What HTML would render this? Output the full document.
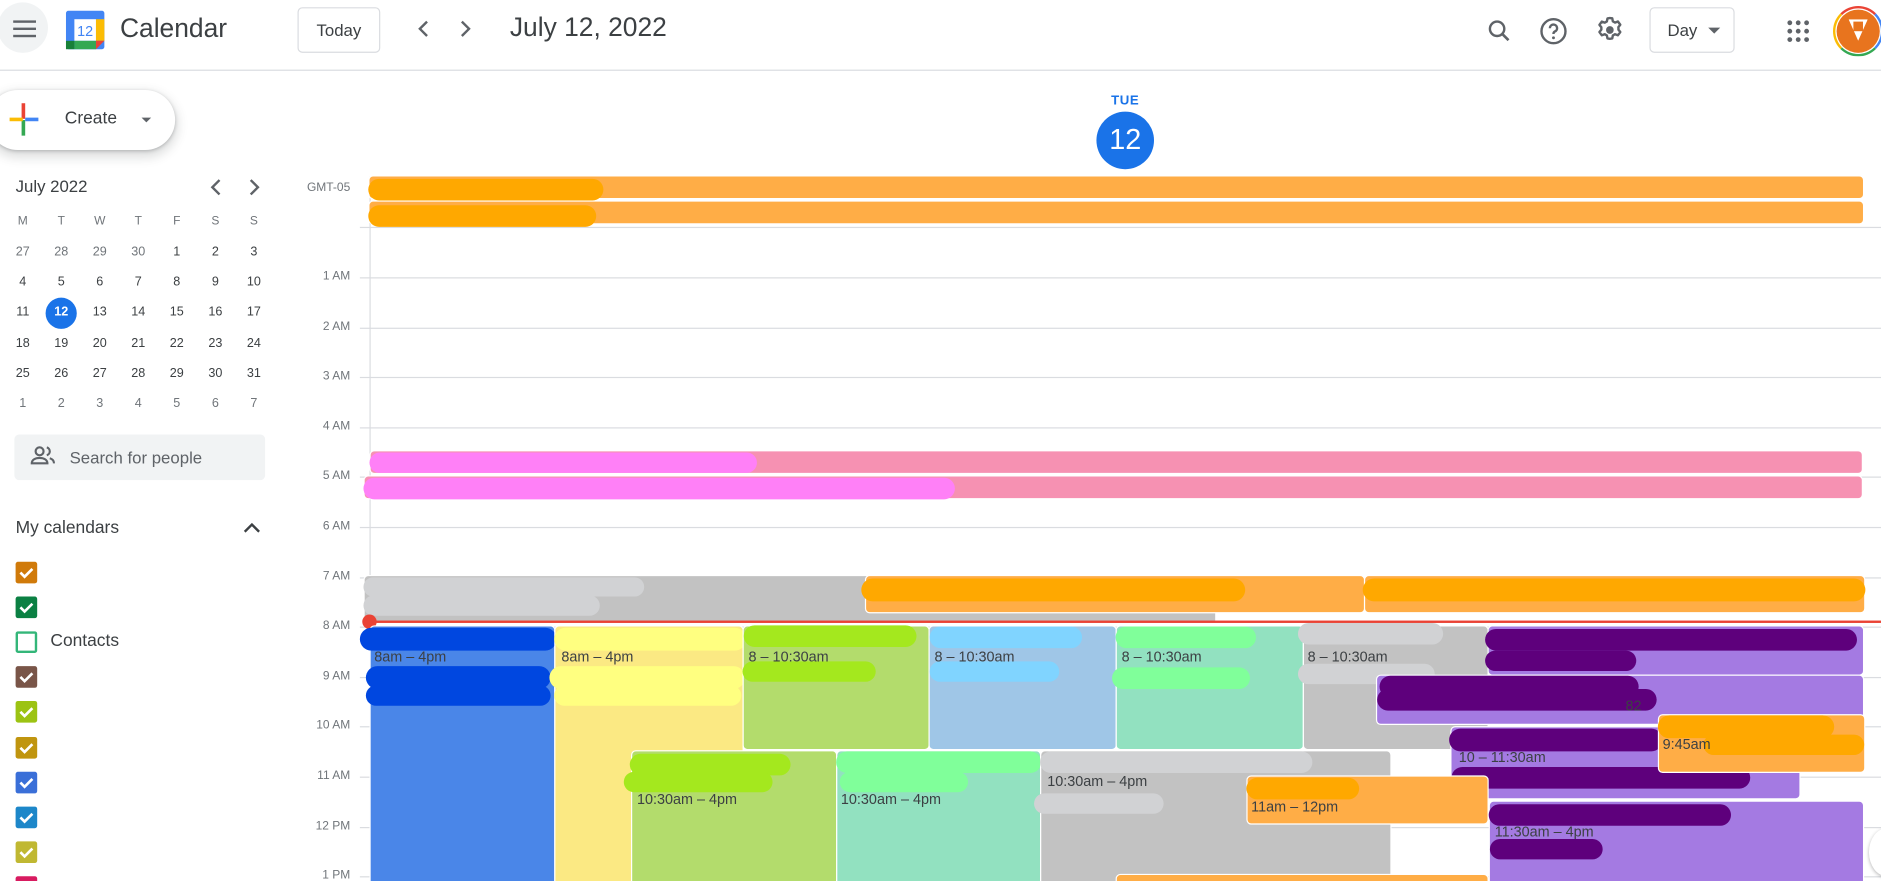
<!DOCTYPE html>
<html><head><meta charset="utf-8"><style>
*{box-sizing:border-box;margin:0;padding:0}
html,body{width:1881px;height:881px;overflow:hidden;background:#fff;font-family:"Liberation Sans",Arial,sans-serif;color:#3c4043}
#w{position:absolute;left:0;top:0;width:1568px;height:734px;transform:scale(1.1996,1.2003);transform-origin:0 0;overflow:hidden}
.a{position:absolute}
.ev{position:absolute;border:1px solid #fff;border-radius:4px;font-size:12px;color:#3c4043;overflow:hidden}
.bl{position:absolute;border-radius:10px}
.hl{position:absolute;left:300px;right:0;height:1px;background:#dadce0}
.hr{position:absolute;left:230px;width:62px;text-align:right;font-size:10px;color:#70757a}
.mc{position:absolute;width:20px;text-align:center;font-size:10.5px;color:#3c4043}
.cb{position:absolute;left:13px;width:18px;height:18px;border-radius:2px}
.cb svg{position:absolute;left:2px;top:2px}
</style></head><body><div id="w">
<div class="a" style="left:-2px;top:2px;width:42px;height:42px;border-radius:50%;background:#f1f3f4"></div>
<div class="a" style="left:11px;top:17px;width:19px;height:2px;background:#5f6368;box-shadow:0 6px 0 #5f6368,0 12px 0 #5f6368"></div>
<svg class="a" style="left:54px;top:8px" width="34" height="34" viewBox="0 0 34 34"><rect x="1" y="1" width="32" height="32" rx="2" fill="#4285f4"/><rect x="8" y="8" width="18" height="18" fill="#fff"/><rect x="26" y="8" width="7" height="18" fill="#fbbc04"/><rect x="8" y="26" width="18" height="7" fill="#34a853"/><rect x="1" y="26" width="7" height="7" fill="#188038"/><path d="M26 26h7l-7 7z" fill="#ea4335"/><text x="17" y="22" font-size="12" text-anchor="middle" fill="#4285f4" font-family="Liberation Sans">12</text></svg>
<div class="a" style="left:100px;top:11px;font-size:22px;color:#3c4043">Calendar</div>
<div class="a" style="left:248px;top:6px;width:69px;height:38px;border:1px solid #dadce0;border-radius:4px;font-size:14px;text-align:center;line-height:36px;color:#3c4043">Today</div>
<svg class="a" style="left:348px;top:17px" width="10" height="14"><path d="M8 1L2 7l6 6" stroke="#5f6368" stroke-width="2" fill="none"/></svg>
<svg class="a" style="left:383px;top:17px" width="10" height="14"><path d="M2 1l6 6-6 6" stroke="#5f6368" stroke-width="2" fill="none"/></svg>
<div class="a" style="left:425px;top:10px;font-size:22px;color:#3c4043">July 12, 2022</div>
<svg class="a" style="left:1238px;top:14px" width="24" height="24" viewBox="0 0 24 24"><circle cx="10" cy="10" r="6" stroke="#5f6368" stroke-width="2" fill="none"/><path d="M14.5 14.5l5 5" stroke="#5f6368" stroke-width="2.2"/></svg>
<svg class="a" style="left:1283px;top:14px" width="24" height="24" viewBox="0 0 24 24"><circle cx="12" cy="12" r="10" stroke="#5f6368" stroke-width="2" fill="none"/><path d="M9 9.5a3 3 0 1 1 4 2.8c-.8.4-1 1-1 2" stroke="#5f6368" stroke-width="2" fill="none"/><circle cx="12" cy="17.5" r="1.2" fill="#5f6368"/></svg>
<svg class="a" style="left:1330px;top:13px" width="24" height="24" viewBox="0 0 24 24"><path d="M12 2l2 .3.5 2.5 1.8 1 2.4-.9 2 2.7-1.6 2 .1 2-.1 .1 1.6 2-2 2.7-2.4-.9-1.8 1-.5 2.5-2 .3-2-.3-.5-2.5-1.8-1-2.4.9-2-2.7 1.6-2v-2l-1.6-2 2-2.7 2.4.9 1.8-1 .5-2.5z" stroke="#5f6368" stroke-width="2" fill="none" stroke-linejoin="round"/><circle cx="12" cy="12" r="3.2" fill="#5f6368"/></svg>
<div class="a" style="left:1375px;top:6px;width:71px;height:38px;border:1px solid #dadce0;border-radius:4px;font-size:14px;line-height:36px;padding-left:14px;color:#3c4043">Day</div>
<div class="a" style="left:1424px;top:23px;border:5px solid transparent;border-top-color:#5f6368;border-bottom:0"></div>
<div class="a" style="left:1490px;top:17px;width:4px;height:4px;border-radius:50%;background:#5f6368;box-shadow:7px 0 #5f6368,14px 0 #5f6368,0 7px #5f6368,7px 7px #5f6368,14px 7px #5f6368,0 14px #5f6368,7px 14px #5f6368,14px 14px #5f6368"></div>
<div class="a" style="left:1528px;top:5px;width:42px;height:42px;border-radius:50%;border:2px solid #ea4335;border-bottom-color:#34a853;border-right-color:#4285f4;border-left-color:#fbbc04;background:#fff"></div>
<div class="a" style="left:1531px;top:8px;width:36px;height:36px;border-radius:50%;background:#e8741e"></div>
<div class="a" style="left:1541px;top:16px;width:16px;height:18px;background:#fff;clip-path:polygon(0 0,100% 0,50% 100%)"></div>
<div class="a" style="left:1545px;top:18px;width:8px;height:8px;background:#e8741e"></div>
<div class="a" style="left:0;top:58px;width:1568px;height:1px;background:#dadce0"></div>
<div class="a" style="left:-10px;top:75px;width:156px;height:50px;border-radius:25px;background:#fff;box-shadow:0 1px 3px rgba(60,64,67,.3),0 4px 8px 3px rgba(60,64,67,.15)"></div>
<div class="a" style="left:18px;top:86px;width:3px;height:13px;background:#ea4335"></div>
<div class="a" style="left:18px;top:100px;width:3px;height:13px;background:#34a853"></div>
<div class="a" style="left:8px;top:98px;width:11px;height:3px;background:#fbbc04"></div>
<div class="a" style="left:21px;top:98px;width:11px;height:3px;background:#4285f4"></div>
<div class="a" style="left:54px;top:91px;font-size:14.5px;color:#3c4043">Create</div>
<div class="a" style="left:118px;top:98px;border:4px solid transparent;border-top-color:#5f6368;border-bottom:0"></div>
<div class="a" style="left:13px;top:147px;font-size:14px;color:#3c4043">July 2022</div>
<svg class="a" style="left:175px;top:149px" width="10" height="14"><path d="M8 1L2 7l6 6" stroke="#5f6368" stroke-width="2" fill="none"/></svg>
<svg class="a" style="left:207px;top:149px" width="10" height="14"><path d="M2 1l6 6-6 6" stroke="#5f6368" stroke-width="2" fill="none"/></svg>
<div id="mc"></div>
<div class="a" style="left:38px;top:248px;width:26px;height:26px;border-radius:50%;background:#1a73e8"></div>
<div class="a" style="left:12px;top:362px;width:209px;height:38px;border-radius:4px;background:#f1f3f4"></div>
<svg class="a" style="left:25px;top:370px" width="22" height="20" viewBox="0 0 22 20"><circle cx="8" cy="6" r="3.3" stroke="#5f6368" stroke-width="1.8" fill="none"/><path d="M1.5 16c0-3 3-4.5 6.5-4.5s6.5 1.5 6.5 4.5z" stroke="#5f6368" stroke-width="1.8" fill="none"/><path d="M14 2.8a3.3 3.3 0 0 1 0 6.4M16.5 11.8c2 .6 3.5 2 3.5 4.2" stroke="#5f6368" stroke-width="1.8" fill="none"/></svg>
<div class="a" style="left:58px;top:373px;font-size:14px;color:#5f6368">Search for people</div>
<div class="a" style="left:13px;top:432px;font-size:14.5px;color:#3c4043">My calendars</div>
<svg class="a" style="left:203px;top:435px" width="14" height="10"><path d="M1 8l6-6 6 6" stroke="#3c4043" stroke-width="2" fill="none"/></svg>
<div id="cbs"></div>
<div class="a" style="left:42px;top:526px;font-size:14.5px;color:#3c4043">Contacts</div>
<div class="a" style="left:914px;top:78px;width:48px;text-align:center;font-size:11px;font-weight:bold;color:#1a73e8;letter-spacing:.5px">TUE</div>
<div class="a" style="left:914px;top:93px;width:48px;height:48px;border-radius:50%;background:#1a73e8;color:#fff;font-size:24px;text-align:center;line-height:48px">12</div>
<div class="a" style="left:240px;top:151px;width:52px;text-align:right;font-size:10px;color:#70757a">GMT-05</div>
<div class="a" style="left:308px;top:147px;width:1px;height:600px;background:#dadce0"></div>
<div class="hl" style="top:189px"></div>
<div id="hrs"></div>
<div class="ev" style="left:307px;top:146px;width:1247px;height:20px;background:#ffad46"></div>
<div class="bl" style="left:307px;top:149px;width:196px;height:18px;background:#ffa800"></div>
<div class="ev" style="left:307px;top:167px;width:1247px;height:20px;background:#ffad46"></div>
<div class="bl" style="left:307px;top:171px;width:190px;height:18px;background:#ffa800"></div>
<div class="ev" style="left:308px;top:375px;width:1245px;height:20px;background:#f691b2"></div>
<div class="bl" style="left:308px;top:377px;width:323px;height:17px;background:#ff80f7"></div>
<div class="ev" style="left:303px;top:396px;width:1250px;height:20px;background:#f691b2"></div>
<div class="bl" style="left:303px;top:398px;width:493px;height:18px;background:#ff80f7"></div>
<div class="ev" style="left:303px;top:479px;width:711px;height:40px;background:#c2c2c2;border-radius:4px 0 0 0"></div>
<div class="bl" style="left:303px;top:481px;width:234px;height:16px;background:#d1d2d4"></div>
<div class="bl" style="left:303px;top:496px;width:197px;height:17px;background:#d1d2d4"></div>
<div class="ev" style="left:721px;top:479px;width:417px;height:32px;background:#ffad46"></div>
<div class="bl" style="left:718px;top:482px;width:320px;height:19px;background:#ffa800"></div>
<div class="ev" style="left:1137px;top:479px;width:418px;height:32px;background:#ffad46"></div>
<div class="bl" style="left:1136px;top:482px;width:419px;height:19px;background:#ffa800"></div>
<div class="a" style="left:308px;top:517px;width:1260px;height:2px;background:#ea4335"></div>
<div class="a" style="left:302px;top:512px;width:12px;height:12px;border-radius:50%;background:#ea4335"></div>
<div class="ev" style="left:308px;top:521px;width:155px;height:230px;background:#4a86e8"></div>
<div class="bl" style="left:300px;top:523px;width:164px;height:19px;background:#0047e0"></div>
<div class="bl" style="left:305px;top:555px;width:154px;height:19px;background:#0047e0"></div>
<div class="bl" style="left:305px;top:571px;width:154px;height:17px;background:#0047e0"></div>
<div class="a" style="left:312px;top:540px;font-size:12px;color:#3c4043">8am – 4pm</div>
<div class="ev" style="left:462px;top:521px;width:158px;height:230px;background:#fbe983"></div>
<div class="bl" style="left:462px;top:523px;width:160px;height:19px;background:#ffff80"></div>
<div class="bl" style="left:458px;top:555px;width:163px;height:19px;background:#ffff80"></div>
<div class="bl" style="left:462px;top:571px;width:156px;height:17px;background:#ffff80"></div>
<div class="a" style="left:468px;top:540px;font-size:12px;color:#3c4043">8am – 4pm</div>
<div class="ev" style="left:619px;top:521px;width:156px;height:104px;background:#b3dc6c"></div>
<div class="bl" style="left:620px;top:521px;width:144px;height:18px;background:#a4e81e"></div>
<div class="bl" style="left:619px;top:551px;width:111px;height:17px;background:#a4e81e"></div>
<div class="a" style="left:624px;top:540px;font-size:12px;color:#3c4043">8 – 10:30am</div>
<div class="ev" style="left:774px;top:521px;width:157px;height:104px;background:#9fc6e7"></div>
<div class="bl" style="left:775px;top:522px;width:127px;height:18px;background:#80d4ff"></div>
<div class="bl" style="left:775px;top:551px;width:108px;height:17px;background:#80d4ff"></div>
<div class="a" style="left:779px;top:540px;font-size:12px;color:#3c4043">8 – 10:30am</div>
<div class="ev" style="left:930px;top:521px;width:157px;height:104px;background:#92e1c0"></div>
<div class="bl" style="left:930px;top:522px;width:117px;height:18px;background:#80ff9a"></div>
<div class="bl" style="left:927px;top:556px;width:115px;height:18px;background:#80ff9a"></div>
<div class="a" style="left:935px;top:540px;font-size:12px;color:#3c4043">8 – 10:30am</div>
<div class="ev" style="left:1086px;top:521px;width:155px;height:104px;background:#c2c2c2"></div>
<div class="bl" style="left:1082px;top:519px;width:121px;height:18px;background:#d1d2d4"></div>
<div class="bl" style="left:1082px;top:553px;width:114px;height:17px;background:#d1d2d4"></div>
<div class="a" style="left:1090px;top:540px;font-size:12px;color:#3c4043">8 – 10:30am</div>
<div class="ev" style="left:1240px;top:521px;width:314px;height:42px;background:#a47ae2"></div>
<div class="bl" style="left:1238px;top:524px;width:310px;height:18px;background:#5e007c"></div>
<div class="bl" style="left:1238px;top:542px;width:126px;height:17px;background:#5e007c"></div>
<div class="ev" style="left:1147px;top:562px;width:407px;height:42px;background:#a47ae2"></div>
<div class="bl" style="left:1150px;top:563px;width:216px;height:18px;background:#5e007c"></div>
<div class="bl" style="left:1148px;top:574px;width:233px;height:18px;background:#5e007c"></div>
<div class="a" style="left:1355px;top:581px;font-size:12px;color:#3c4043">82</div>
<div class="ev" style="left:1209px;top:605px;width:292px;height:61px;background:#a47ae2"></div>
<div class="bl" style="left:1208px;top:607px;width:178px;height:19px;background:#5e007c"></div>
<div class="a" style="left:1216px;top:624px;font-size:12px;color:#3c4043">10 – 11:30am</div>
<div class="bl" style="left:1210px;top:639px;width:249px;height:18px;background:#5e007c"></div>
<div class="ev" style="left:1382px;top:595px;width:173px;height:49px;background:#ffad46"></div>
<div class="bl" style="left:1382px;top:596px;width:147px;height:19px;background:#ffa800"></div>
<div class="bl" style="left:1420px;top:612px;width:134px;height:17px;background:#ffa800"></div>
<div class="a" style="left:1386px;top:613px;font-size:12px;color:#3c4043">9:45am</div>
<div class="ev" style="left:526px;top:625px;width:172px;height:130px;background:#b3dc6c"></div>
<div class="bl" style="left:525px;top:628px;width:134px;height:18px;background:#a4e81e"></div>
<div class="bl" style="left:520px;top:643px;width:124px;height:17px;background:#a4e81e"></div>
<div class="a" style="left:531px;top:659px;font-size:12px;color:#3c4043">10:30am – 4pm</div>
<div class="ev" style="left:697px;top:625px;width:171px;height:130px;background:#92e1c0"></div>
<div class="bl" style="left:697px;top:626px;width:171px;height:18px;background:#80ff9a"></div>
<div class="bl" style="left:700px;top:643px;width:107px;height:17px;background:#80ff9a"></div>
<div class="a" style="left:701px;top:659px;font-size:12px;color:#3c4043">10:30am – 4pm</div>
<div class="ev" style="left:867px;top:625px;width:293px;height:130px;background:#c2c2c2"></div>
<div class="bl" style="left:867px;top:626px;width:227px;height:18px;background:#d1d2d4"></div>
<div class="bl" style="left:862px;top:661px;width:108px;height:17px;background:#d1d2d4"></div>
<div class="a" style="left:873px;top:644px;font-size:12px;color:#3c4043">10:30am – 4pm</div>
<div class="ev" style="left:1039px;top:646px;width:202px;height:41px;background:#ffad46"></div>
<div class="bl" style="left:1039px;top:648px;width:94px;height:18px;background:#ffa800"></div>
<div class="a" style="left:1043px;top:665px;font-size:12px;color:#3c4043">11am – 12pm</div>
<div class="ev" style="left:1241px;top:667px;width:313px;height:90px;background:#a47ae2"></div>
<div class="bl" style="left:1241px;top:670px;width:202px;height:18px;background:#5e007c"></div>
<div class="a" style="left:1246px;top:686px;font-size:12px;color:#3c4043">11:30am – 4pm</div>
<div class="bl" style="left:1242px;top:699px;width:94px;height:17px;background:#5e007c"></div>
<div class="ev" style="left:930px;top:728px;width:311px;height:20px;background:#ffad46"></div>
<div class="a" style="left:1558px;top:690px;width:30px;height:40px;border-radius:50%;background:#fff;box-shadow:0 1px 3px rgba(0,0,0,.3)"></div>
</div>
<script>
var mc=document.getElementById('mc'),h='';
var d=['M','T','W','T','F','S','S'];
for(var i=0;i<7;i++)h+='<div class="mc" style="left:'+(9+i*32.1)+'px;top:179px;font-size:10px;color:#70757a">'+d[i]+'</div>';
var days=[27,28,29,30,1,2,3];
for(var r=0;r<6;r++){for(var c=0;c<7;c++){var n;if(r==0)n=days[c];else{n=4+(r-1)*7+c;if(n>31)n-=31;}
var col=(r==0&&c<4)||(r==5&&n<8)?'#70757a':'#3c4043';
var st=(n==12&&r==2)?'color:#fff;font-weight:bold;z-index:2;':'color:'+col+';';
h+='<div class="mc" style="left:'+(9+c*32.1)+'px;top:'+(204+r*25.2)+'px;'+st+'">'+n+'</div>';}}
mc.innerHTML=h;
var cc=['#d07a0a','#0b8043','','#795548','#9cc313','#c0950f','#3a6fd8','#1d87c9','#c0b832','#d81b60'];
var s='';for(var j=0;j<cc.length;j++){var t=467+j*29.1;
if(cc[j]=='')s+='<div class="cb" style="top:'+(t+1)+'px;border:2px solid #33b679;width:18px;height:18px"></div>';
else s+='<div class="cb" style="top:'+(t+1)+'px;background:'+cc[j]+'"><svg width="14" height="14"><path d="M2 7l3.5 3.5L12 4" stroke="#fff" stroke-width="2.2" fill="none"/></svg></div>';}
document.getElementById('cbs').innerHTML=s;
var hh='',lb=['1 AM','2 AM','3 AM','4 AM','5 AM','6 AM','7 AM','8 AM','9 AM','10 AM','11 AM','12 PM','1 PM'];
for(var k=0;k<13;k++){var y=231+k*41.6;hh+='<div class="hl" style="top:'+y+'px"></div><div class="hr" style="top:'+(y-6)+'px">'+lb[k]+'</div>';}
document.getElementById('hrs').innerHTML=hh;
</script>
</body></html>
